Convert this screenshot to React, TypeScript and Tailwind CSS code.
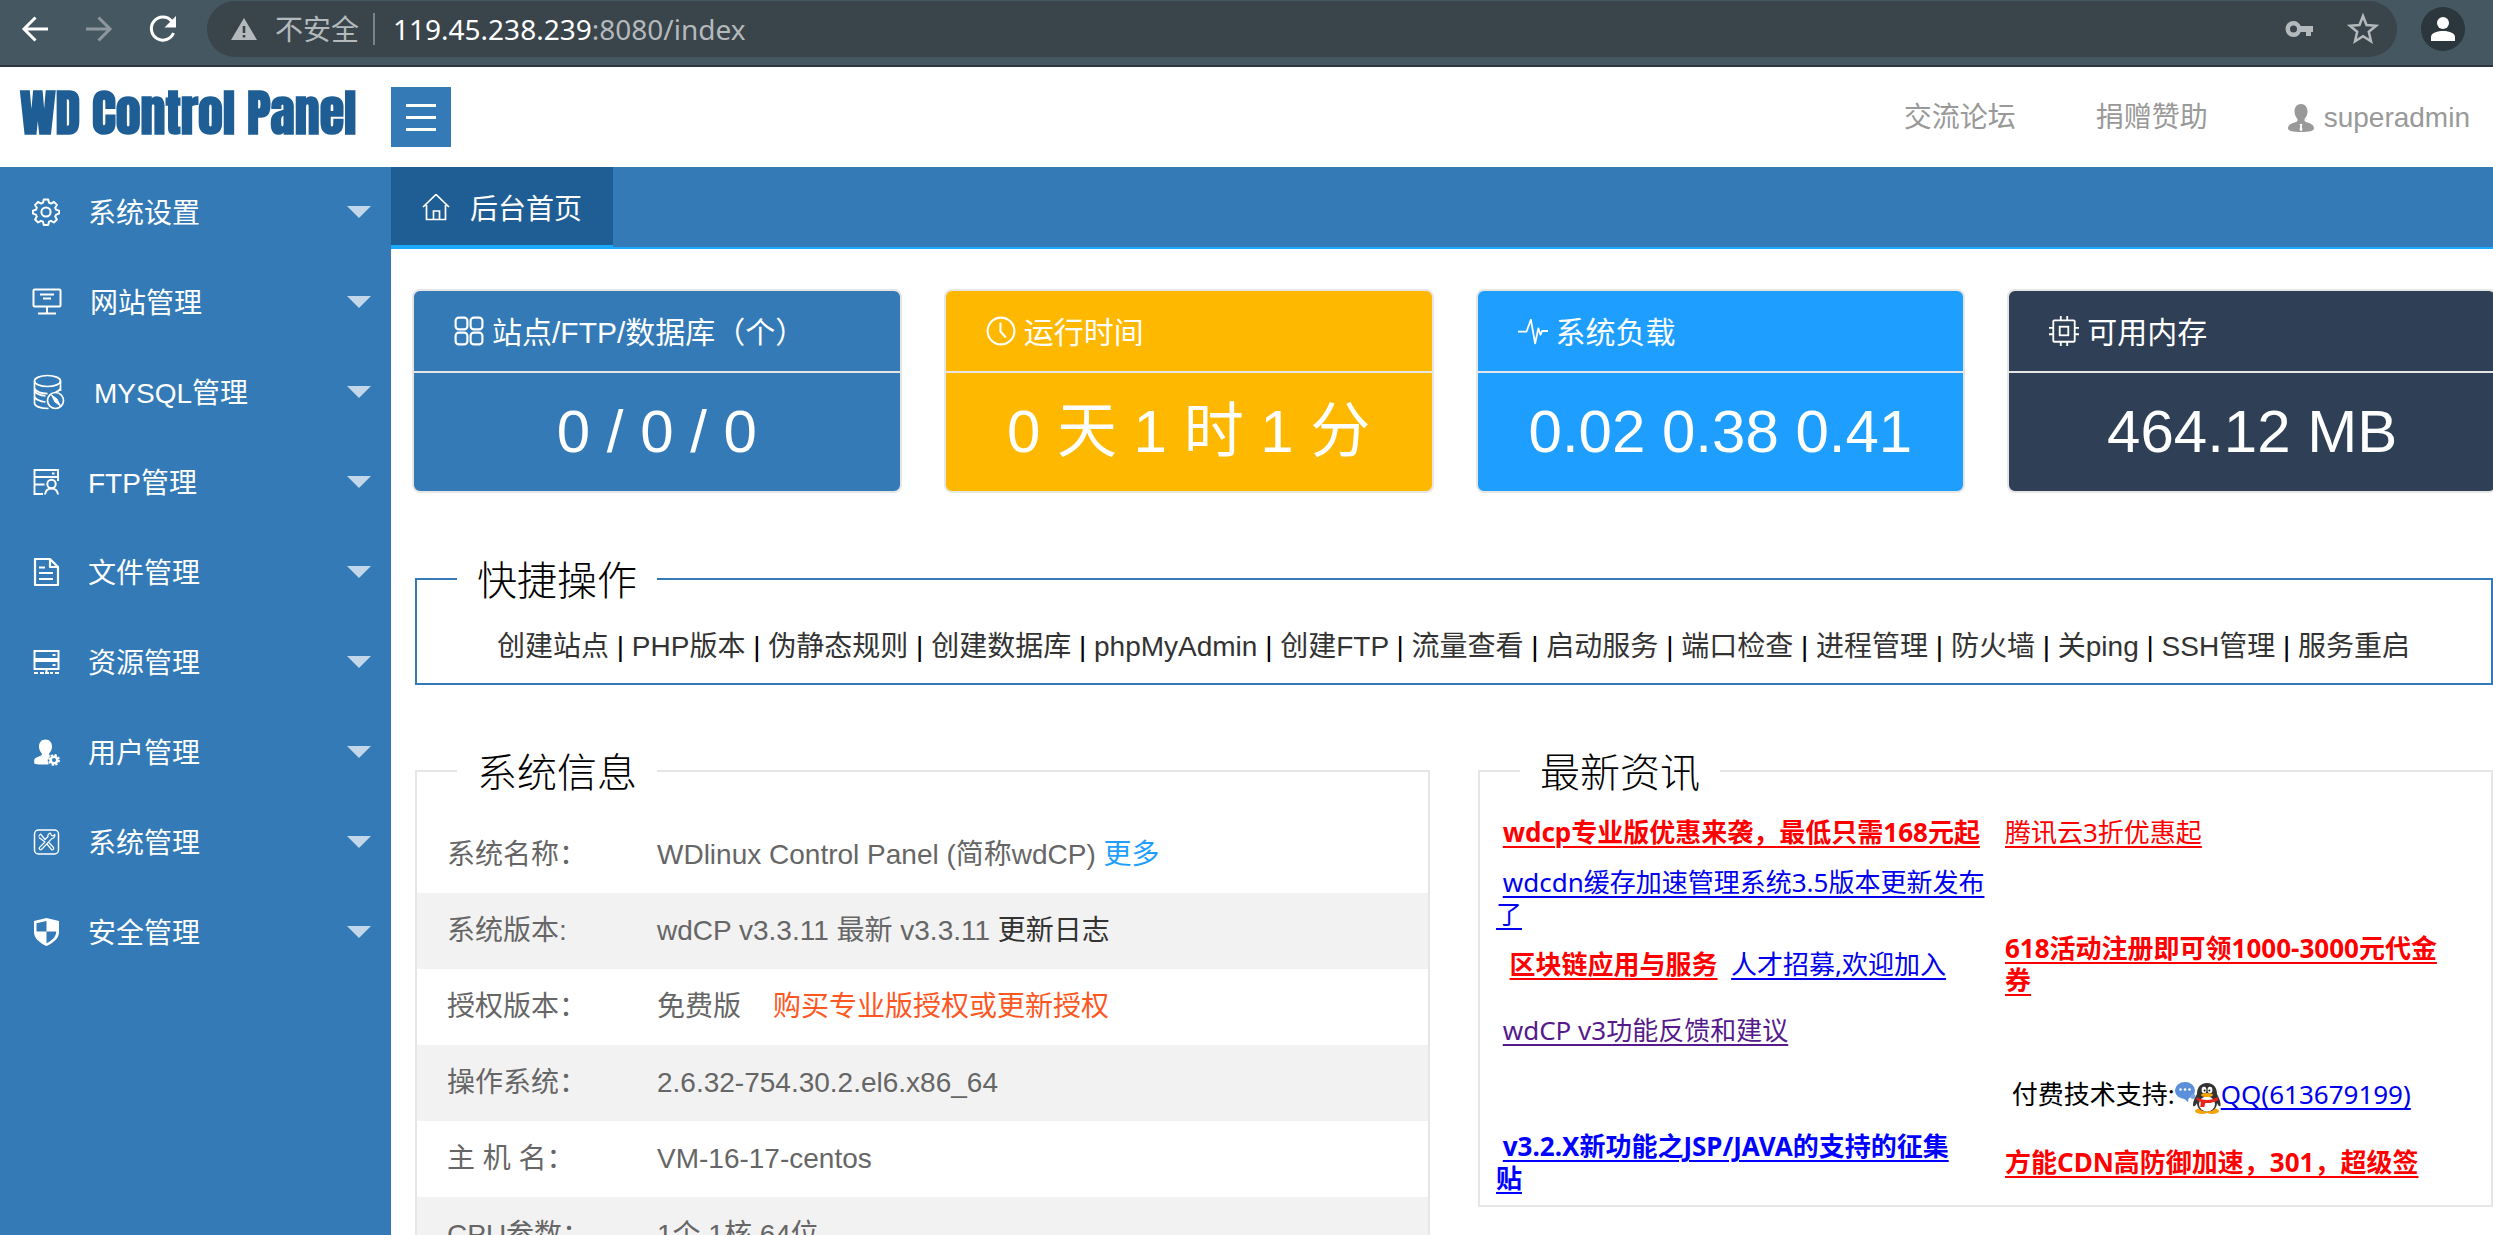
import { ReactNode } from "react";

function Svg({ className, box = 28, children }: { className: string; box?: number; children: ReactNode }) {
  return (
    <svg viewBox={`0 0 ${box} ${box}`} className={className} fill="none" stroke="currentColor" strokeWidth="2" aria-hidden="true">
      {children}
    </svg>
  );
}

const GearIcon = () => (
  <Svg className="h-7 w-7">
    <circle cx="14" cy="14" r="4.6" />
    <path
      strokeLinejoin="round"
      d="M11.8 1.5h4.4l.8 3.2 2 .9 2.9-1.7 3 3-1.7 2.9.9 2 3 .8v3l-3 1-.9 2 1.7 2.9-3 3-2.9-1.7-2 .9-.8 3.2h-4.4l-.8-3.2-2-.9-2.9 1.7-3-3 1.7-2.9-.9-2-3-1v-3l3-.8.9-2-1.7-2.9 3-3L9 5.600l2-.9z"
    />
  </Svg>
);

const MonitorIcon = () => (
  <svg viewBox="0 0 30 28" className="h-7 w-[30px]" fill="none" stroke="currentColor" strokeWidth="2" aria-hidden="true">
    <rect x="1.5" y="1.5" width="27" height="17" rx="1" />
    <path d="M15 18.5v7M6 25.5h18M8 6.500h14M11 10.500h8" />
  </svg>
);

const DatabaseIcon = () => (
  <svg viewBox="0 0 34 36" className="h-9 w-[34px]" fill="none" stroke="currentColor" strokeWidth="1.7" aria-hidden="true">
    <ellipse cx="15.5" cy="7" rx="13" ry="5.5" />
    <path d="M2.500 7v22c0 3 5 5.500 14 5.500M28.500 7v10M2.500 14.500c2 3.500 7 5 13 5.200M28.500 14.500c-1 1.800-2.600 3-5 3.500M2.500 23c2 3 6 4.500 11 5M2.500 17c2 3 6 4.500 11 5" />
    <circle cx="23.500" cy="26.500" r="8" />
    <path d="M19.500 21l5.500 4 3.500 7-5.500-4z" fill="currentColor" strokeWidth="1" />
  </svg>
);

const FtpIcon = () => (
  <Svg className="h-7 w-7">
    <path d="M11 26H2.500V2H26v11M2.500 9H26M2.500 16.500h10M20 5.500h2.500" strokeWidth="1.900" />
    <circle cx="19.500" cy="16" r="4.200" />
    <path d="M13 26.500c.5-4 3-6 6.500-6s6 2 6.500 6" />
  </Svg>
);

const FileIcon = () => (
  <svg viewBox="0 0 28 30" className="h-[30px] w-7" fill="none" stroke="currentColor" strokeWidth="2.2" strokeLinejoin="round" aria-hidden="true">
    <path d="M3 2h15l8 8v18H3zM18 2v8h8" />
    <path d="M7 10.500h6M7 16h14M7 22h14" />
  </svg>
);

const ServerIcon = () => (
  <Svg className="h-7 w-7">
    <rect x="2.500" y="3" width="24" height="8" />
    <rect x="2.500" y="13" width="24" height="8" />
    <path d="M20.500 7h3M20.500 17h3M2 25h4M8 25h4M13 25h4M18 25h3M23 25h4M14.500 21v5" />
  </Svg>
);

const UserGearIcon = () => (
  <Svg className="h-7 w-7">
    <path
      stroke="none"
      fill="currentColor"
      d="M13.500 1.500c4 0 6.500 2.800 6.500 7 0 2.600-1 5-2.600 6.500-.6.700-.4 2 .4 2.400l1 .5c-2.600 1-3.500 3.500-2.800 6l.7 2.500c-5 .4-10 .3-14.200-.7-.8-2.900-.3-5.300 2-6.200l4.600-1.900c.9-.5 1-1.700.4-2.500C8 13.500 7 11.100 7 8.500c0-4.200 2.500-7 6.500-7z"
    />
    <circle cx="22" cy="22" r="3.300" strokeWidth="2.600" />
    <circle cx="22" cy="22" r="5" strokeDasharray="2.200 1.730" strokeWidth="2" />
  </Svg>
);

const ToolsIcon = () => (
  <Svg className="h-7 w-7">
    <rect x="2.500" y="2" width="24" height="24" rx="4" strokeWidth="1.500" />
    <path
      strokeWidth="1.200"
      strokeLinejoin="round"
      d="M6.500 8.500L8.500 6l4.500 5.500 3-3c-.5-1.500.5-3 2.500-3.300L19.500 7.500l1.500.5 1.800-1.500c.4 2-1 4-3 4.200L9.500 21.500c-1 1-3.200-1-2-2.200L13 14 7 9.500M14.500 15.500l5 6c1.200 1 3-.8 2-2l-5-5.500"
    />
  </Svg>
);

const ShieldIcon = () => (
  <svg viewBox="0 0 28 30" className="h-[30px] w-7" aria-hidden="true">
    <path fill="currentColor" fillRule="evenodd" d="M14.500 1l12.500 3v11c0 6-5 10.500-12.500 14C7 25.500 2 21 2 15V4zM14.500 4L4.500 6.200V14.500h10zM14.500 14.500V26.300c5.500-2.700 9.500-6.300 9.800-11.800z" />
  </svg>
);

const menu: { label: string; icon: ReactNode }[] = [
  { label: "系统设置", icon: <GearIcon /> },
  { label: "网站管理", icon: <MonitorIcon /> },
  { label: "MYSQL管理", icon: <DatabaseIcon /> },
  { label: "FTP管理", icon: <FtpIcon /> },
  { label: "文件管理", icon: <FileIcon /> },
  { label: "资源管理", icon: <ServerIcon /> },
  { label: "用户管理", icon: <UserGearIcon /> },
  { label: "系统管理", icon: <ToolsIcon /> },
  { label: "安全管理", icon: <ShieldIcon /> },
];

const cards: { title: string; value: string; bg: string; icon: ReactNode }[] = [
  {
    title: "站点/FTP/数据库（个）",
    value: "0 / 0 / 0",
    bg: "bg-[#337ab7]",
    icon: (
      <Svg className="h-[30px] w-[30px]">
        <rect x="1.500" y="1.500" width="11" height="11" rx="3" />
        <rect x="15.500" y="1.500" width="11" height="11" rx="3" />
        <rect x="1.500" y="15.500" width="11" height="11" rx="3" />
        <rect x="15.500" y="15.500" width="11" height="11" rx="3" />
      </Svg>
    ),
  },
  {
    title: "运行时间",
    value: "0 天 1 时 1 分",
    bg: "bg-[#ffb800]",
    icon: (
      <Svg className="h-[30px] w-[30px]">
        <circle cx="14" cy="14" r="12.500" />
        <path d="M13.500 6v8.500l5 5.500" />
      </Svg>
    ),
  },
  {
    title: "系统负载",
    value: "0.02 0.38 0.41",
    bg: "bg-[#1e9fff]",
    icon: (
      <Svg className="h-[30px] w-[30px]">
        <path strokeWidth="1.700" strokeLinejoin="round" d="M0 14.500h8l4-11 4 22 3-14 2 6 1.500-3.500H28" />
      </Svg>
    ),
  },
  {
    title: "可用内存",
    value: "464.12 MB",
    bg: "bg-[#2f4056]",
    icon: (
      <Svg className="h-[30px] w-[30px]">
        <rect x="4" y="4" width="20" height="20" rx="1" strokeWidth="1.700" />
        <rect x="10" y="10" width="8" height="8" strokeWidth="1.700" />
        <path strokeWidth="1.700" d="M11 0v4M17 0v4M11 24v4M17 24v4M0 11h4M0 17h4M24 11h4M24 17h4" />
      </Svg>
    ),
  },
];

const shortcuts = [
  "创建站点", "PHP版本", "伪静态规则", "创建数据库", "phpMyAdmin", "创建FTP", "流量查看",
  "启动服务", "端口检查", "进程管理", "防火墙", "关ping", "SSH管理", "服务重启",
];

const info: { name: string; value: ReactNode }[] = [
  { name: "系统名称：", value: <>WDlinux Control Panel (简称wdCP) <a href="#" className="text-[#1e9fff]">更多</a></> },
  { name: "系统版本:", value: <>wdCP v3.3.11 最新 v3.3.11 <a href="#" className="text-[#333]">更新日志</a></> },
  { name: "授权版本：", value: <>免费版<a href="#" className="ml-8 text-[#ff5722]">购买专业版授权或更新授权</a></> },
  { name: "操作系统：", value: "2.6.32-754.30.2.el6.x86_64" },
  { name: "主 机 名：", value: "VM-16-17-centos" },
  { name: "CPU参数：", value: "1个 1核 64位" },
];

function News({ className, children }: { className: string; children: ReactNode }) {
  return <a href="#" className={`underline underline-offset-4 decoration-2 ${className}`}>{children}</a>;
}

function QQIcon() {
  return (
    <svg viewBox="0 0 46 32" className="inline-block h-8 w-[46px] align-middle" aria-hidden="true">
      <ellipse cx="10" cy="8.500" rx="10" ry="8.500" fill="#5b8fd9" />
      <path d="M7 15l6 5 1-6z" fill="#5b8fd9" />
      <circle cx="18" cy="14.500" r="2.500" fill="#7ba6e3" />
      <circle cx="5.500" cy="7.500" r="1.300" fill="#fff" />
      <circle cx="10" cy="7.500" r="1.300" fill="#fff" />
      <circle cx="14.500" cy="7.500" r="1.300" fill="#fff" />
      <ellipse cx="27" cy="29" rx="7" ry="3" fill="#f5a300" />
      <ellipse cx="37" cy="29" rx="7" ry="3" fill="#f5a300" />
      <path d="M32 1c7 0 10 5 10 11 2 4 4 8 3.500 12-1.500 1-2.500-1-3.500-3 0 5-4 8.500-10 8.500S22 26 22 21c-1 2-2.500 4-4 3-.5-4 2-8 4-12 0-6 3-11 10-11z" fill="#333" />
      <ellipse cx="32" cy="22" rx="8" ry="7.500" fill="#fff" />
      <ellipse cx="29" cy="8" rx="2.400" ry="3.200" fill="#fff" />
      <ellipse cx="35" cy="8" rx="2.400" ry="3.200" fill="#fff" />
      <circle cx="29.600" cy="8.500" r="1" fill="#111" />
      <circle cx="34.400" cy="8.500" r="1" fill="#111" />
      <ellipse cx="32" cy="13" rx="6" ry="2" fill="#f5a300" />
      <path d="M21.500 15c6 4 15 4 21 0l.8 3c-4 2.500-8.500 3.300-13 3l-1 4h-4l.5-5-4-2z" fill="#e8231c" />
    </svg>
  );
}

export default function App() {
  return (
    <div className="flex h-screen flex-col overflow-hidden bg-white font-['Liberation_Sans','Noto_Sans_CJK_SC',sans-serif] text-[28px] leading-10">
      <div className="flex h-[67px] shrink-0 items-start border-b-2 border-[#2b363d] bg-[#455761] pt-px font-['Noto_Sans','Noto_Sans_CJK_SC',sans-serif] text-white">
        <div className="flex h-14 items-center gap-8 pl-[19px] pr-7">
          <button aria-label="返回" className="h-8 w-8">
            <Svg className="h-8 w-8" box={32}><path strokeWidth="3" d="M29 16H5M16.500 4.500L5 16l11.500 11.500" /></Svg>
          </button>
          <button aria-label="前进" className="h-8 w-8 text-[#8d979d]">
            <Svg className="h-8 w-8" box={32}><path strokeWidth="3" d="M3 16h24M15.500 4.500L27 16 15.500 27.500" /></Svg>
          </button>
          <button aria-label="刷新" className="h-8 w-8">
            <Svg className="h-8 w-8" box={32}>
              <path strokeWidth="3" d="M26.500 20A11.500 11.500 0 1 1 24.500 8" />
              <path stroke="none" fill="currentColor" d="M29 3v11.500H17.500z" />
            </Svg>
          </button>
        </div>
        <div className="flex h-14 flex-1 items-center rounded-full bg-[#39444b] pl-6 pr-[18px] text-[#b4b9bc]">
          <svg viewBox="0 0 26 24" className="h-6 w-[26px]" aria-hidden="true">
            <path fill="currentColor" fillRule="evenodd" d="M13 1l13 22H0zM11.700 9v7h2.600V9zM11.700 18v2.600h2.600V18z" />
          </svg>
          <span className="ml-[18px]">不安全</span>
          <span className="mx-3.5 h-8 w-0.5 bg-[#7b8388]" />
          <span className="flex-1 pl-1"><span className="text-white">119.45.238.239</span>:8080/index</span>
          <button aria-label="密码">
            <svg viewBox="0 0 30 18" className="h-[18px] w-[30px]" aria-hidden="true">
              <path fill="currentColor" fillRule="evenodd" d="M8.500 1c3.500 0 6 2 7.200 5H28v6h-2v4h-5v-4h-5.300c-1.200 3-3.700 5-7.200 5a8 8 0 0 1 0-16zM8.500 5.500a3.500 3.500 0 1 0 0 7 3.500 3.500 0 0 0 0-7z" />
            </svg>
          </button>
          <button aria-label="收藏" className="ml-8">
            <Svg className="h-8 w-8" box={32}><path strokeWidth="2.500" d="M16 3l3.500 9 9.500.8-7.200 6 2.200 9.500L16 23.200l-8 5.100 2.200-9.500-7.200-6 9.500-.8z" /></Svg>
          </button>
        </div>
        <button aria-label="用户" className="ml-6 mr-7 mt-1.5 flex h-11 w-11 items-center justify-center rounded-full bg-[#2b363d]">
          <svg viewBox="0 0 24 24" className="h-6 w-6" aria-hidden="true">
            <circle cx="12" cy="6" r="6" fill="#fff" />
            <path d="M0 24v-4c0-3.500 5-6 12-6s12 2.500 12 6v4z" fill="#fff" />
          </svg>
        </button>
      </div>

      <header className="flex h-[100px] shrink-0 items-center">
        <h1 className="w-[391px] shrink-0 whitespace-nowrap pb-2 pl-5 font-['Impact','Anton','Liberation_Sans_Narrow','Roboto_Condensed',sans-serif] text-[50px] font-bold leading-none text-[#1f5e95]">
          WD Control Panel
        </h1>
        <button aria-label="菜单" className="flex h-[60px] w-[60px] flex-col items-center justify-center gap-[9px] bg-[#337ab7]">
          <span className="h-[3px] w-[30px] bg-white" />
          <span className="h-[3px] w-[30px] bg-white" />
          <span className="h-[3px] w-[30px] bg-white" />
        </button>
        <nav className="ml-auto flex items-center gap-20 pr-[23px] pt-0.5 text-[#999]">
          <a href="#">交流论坛</a>
          <a href="#">捐赠赞助</a>
          <a href="#" className="flex items-center gap-2.5">
            <svg viewBox="0 0 26 28" className="h-7 w-[26px]" aria-hidden="true">
              <path
                fill="currentColor"
                fillRule="evenodd"
                d="M13 0c4 0 6.500 3 6.500 7.500 0 3-1.300 5.800-3 7.500-.4 1.600.3 2.500 1.500 3 4 1.200 8 2.500 8 6.500 0 2.500-5 3.500-13 3.500S0 27 0 24.500C0 20.500 4 19.200 8 18c1.200-.5 1.900-1.400 1.500-3-1.700-1.700-3-4.500-3-7.500C6.500 3 9 0 13 0zM11.500 20l.8 2-.8 4 1.500 1.300 1.500-1.300-.8-4 .8-2z"
              />
            </svg>
            superadmin
          </a>
        </nav>
      </header>

      <div className="flex min-h-0 flex-1">
        <aside className="w-[391px] shrink-0 bg-[#337ab7] text-white">
          {menu.map((m) => (
            <button key={m.label} className="flex h-[90px] w-full items-center pl-8 pr-5 text-left">
              {m.icon}
              <span className="ml-7 flex-1 pt-1">{m.label}</span>
              <svg viewBox="0 0 24 12" className="h-3 w-6" aria-hidden="true"><path d="M0 0h24L12 12z" fill="#fff" fillOpacity="0.7" /></svg>
            </button>
          ))}
        </aside>

        <main className="min-w-0 flex-1 overflow-hidden">
          <div className="flex h-[82px] border-b-2 border-[#1aa9ff] bg-[#337ab7]">
            <a href="#" className="flex h-[82px] shrink-0 items-center gap-5 border-b-4 border-[#1aa9ff] bg-[#1f5e95] px-[31px] pt-1 text-white">
              <Svg className="h-7 w-7">
                <path strokeWidth="1.700" d="M1 13L14 0.500 27 13M4.500 11v14.500h19V11M11.500 25.500V17h6v8.500" />
              </Svg>
              <span className="pt-1">后台首页</span>
            </a>
          </div>

          <div className="-mr-1 mt-10 grid grid-cols-4 gap-[42px] pl-[21px]">
            {cards.map((c) => (
              <section key={c.title} className={`overflow-hidden rounded-lg border-2 border-[#e6e6e6] text-white ${c.bg}`}>
                <h2 className="flex h-[82px] items-center gap-2 whitespace-nowrap border-b-2 border-[#e6e6e6] pl-10 text-[30px]">
                  {c.icon}
                  <span className="pt-1">{c.title}</span>
                </h2>
                <p className="flex h-[118px] items-center justify-center whitespace-nowrap text-[60px]">{c.value}</p>
              </section>
            ))}
          </div>

          <fieldset className="ml-6 mt-16 border-2 border-[#337ab7] pb-4">
            <legend className="ml-10 px-5 pt-1 text-[40px] font-light">快捷操作</legend>
            <nav className="whitespace-nowrap pl-20 pt-[26px] leading-10 text-black">
              {shortcuts.map((s, i) => (
                <span key={s}>
                  {i > 0 && " | "}
                  <a href="#" className="text-[#333]">{s}</a>
                </span>
              ))}
            </nav>
          </fieldset>

          <div className="ml-6 mt-16 grid grid-cols-2 items-start gap-12">
            <fieldset className="min-w-0 border-2 border-[#e6e6e6]">
              <legend className="ml-10 px-5 pt-1 text-[40px] font-light">系统信息</legend>
              <table className="mt-6 w-full text-[#666]">
                <tbody>
                  {info.map((r) => (
                    <tr key={r.name} className="h-[76px] even:bg-[#f2f2f2]">
                      <th scope="row" className="w-[240px] pl-[30px] text-left font-normal">{r.name}</th>
                      <td>{r.value}</td>
                    </tr>
                  ))}
                </tbody>
              </table>
            </fieldset>

            <fieldset className="min-w-0 border-2 border-[#e6e6e6] pb-2.5">
              <legend className="ml-10 px-5 pt-1 text-[40px] font-light">最新资讯</legend>
              <table className="ml-4 mt-1.5 table-fixed font-['Noto_Sans','Noto_Sans_CJK_SC',sans-serif] text-[26px] leading-8">
                <tbody>
                  <tr className="h-[66px]">
                    <td className="w-[509px] pr-2">&nbsp;<News className="font-bold text-[#ff0000]">wdcp专业版优惠来袭，最低只需168元起</News></td>
                    <td className="w-[450px]"><News className="text-[#ff0000]">腾讯云3折优惠起</News></td>
                  </tr>
                  <tr className="h-[66px]">
                    <td className="pr-2">&nbsp;<News className="text-[#0000ee]">wdcdn缓存加速管理系统3.5版本更新发布了</News></td>
                    <td />
                  </tr>
                  <tr className="h-[66px]">
                    <td className="pr-2">
                      &nbsp;&nbsp;<News className="font-bold text-[#ff0000]">区块链应用与服务</News>&nbsp;&nbsp;
                      <News className="text-[#0000ee]">人才招募,欢迎加入</News>
                    </td>
                    <td><News className="font-bold text-[#ff0000]">618活动注册即可领1000-3000元代金券</News></td>
                  </tr>
                  <tr className="h-[66px]">
                    <td className="pr-2">&nbsp;<News className="text-[#551a8b]">wdCP v3功能反馈和建议</News></td>
                    <td />
                  </tr>
                  <tr className="h-[66px]">
                    <td />
                    <td className="whitespace-nowrap">&nbsp;付费技术支持:<QQIcon /><News className="text-[#0000ee]">QQ(613679199)</News></td>
                  </tr>
                  <tr className="h-[66px]">
                    <td className="pr-2">&nbsp;<News className="font-bold text-[#0000ff]">v3.2.X新功能之JSP/JAVA的支持的征集<br />贴</News></td>
                    <td><News className="font-bold text-[#ff0000]">方能CDN高防御加速，301，超级签</News></td>
                  </tr>
                </tbody>
              </table>
            </fieldset>
          </div>
        </main>
      </div>
    </div>
  );
}
